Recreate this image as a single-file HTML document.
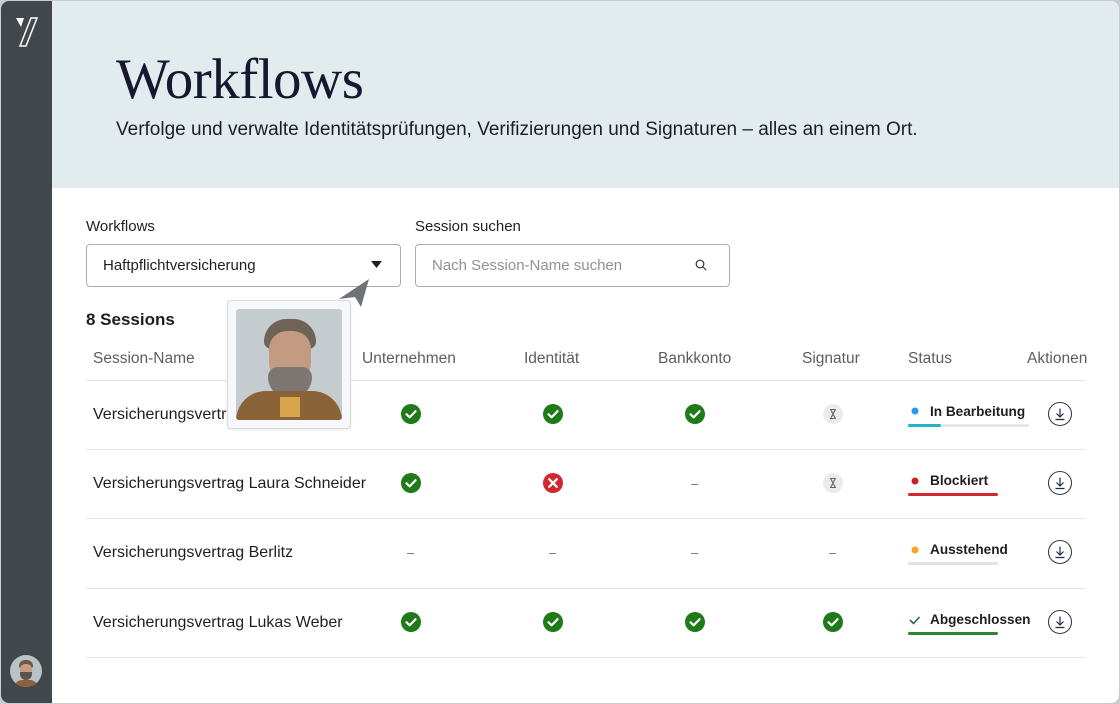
<!DOCTYPE html>
<html><head><meta charset="utf-8"><style>
*{margin:0;padding:0;box-sizing:border-box}
body{width:1120px;height:704px;background:#c9ccce;font-family:"Liberation Sans",sans-serif;color:#1d1f24;position:relative;overflow:hidden}
.frame{position:absolute;left:1px;top:1px;width:1118px;height:702px;border-radius:8px;background:#fff;overflow:hidden}
.side{position:absolute;left:0;top:0;width:51px;height:702px;background:#41474b}
.head{position:absolute;left:51px;top:0;right:0;height:187px;background:#e2ecee}
.a{position:absolute;white-space:nowrap}
h1{position:absolute;left:64px;top:46px;font-family:"Liberation Serif",serif;font-weight:400;font-size:57px;color:#15182e;letter-spacing:-0.5px}
.sub{left:64px;top:118px;font-size:19px;color:#1d1f24}
.lbl{font-size:15px;color:#1d1f24}
.box{position:absolute;border:1px solid #a9abaf;border-radius:4px;height:43px;background:#fff}
.th{font-size:15.5px;color:#5a5d63;top:349px}
.row{position:absolute;left:85px;width:1000px;height:1px;background:#e4e5e7}
.nm{font-size:16px;left:92px}
.dash{font-size:13px;color:#6a6d72}
.st{font-size:13.6px;font-weight:700;color:#1d1f24}
</style></head><body>
<div class="frame">
<div class="side">
<svg class="a" style="left:14px;top:15px" width="24" height="32" viewBox="0 0 24 32"><path d="M1 2 L9 2 L6 11 Z" fill="#fff"/><path d="M16 2 L22 2 L11 30 L5 30 Z" fill="none" stroke="#fff" stroke-width="1.5"/></svg>
<div class="a" style="left:9px;top:654px;width:32px;height:32px;border-radius:50%;background:#b9c2c5;overflow:hidden">
<div class="a" style="left:9px;top:5px;width:14px;height:8px;border-radius:6px 6px 2px 2px;background:#6b5a48"></div>
<div class="a" style="left:10px;top:9px;width:12px;height:13px;border-radius:5px;background:#c89c83"></div>
<div class="a" style="left:10px;top:17px;width:12px;height:8px;border-radius:0 0 6px 6px;background:#5a5350"></div>
<div class="a" style="left:4px;top:25px;width:24px;height:10px;border-radius:8px 8px 0 0;background:#8a6238"></div>
</div>
</div>
<div class="head">
<h1>Workflows</h1>
<div class="a sub">Verfolge und verwalte Identitätsprüfungen, Verifizierungen und Signaturen – alles an einem Ort.</div>
</div>
<div class="a lbl" style="left:85px;top:217px">Workflows</div>
<div class="a lbl" style="left:414px;top:217px">Session suchen</div>
<div class="box" style="left:85px;top:243px;width:315px"></div>
<div class="a" style="left:102px;top:256px;font-size:15px">Haftpflichtversicherung</div>
<svg class="a" style="left:370px;top:260px" width="12" height="8"><path d="M0 0 L11 0 L5.5 7Z" fill="#1d1f24"/></svg>
<div class="box" style="left:414px;top:243px;width:315px"></div>
<div class="a" style="left:431px;top:256px;font-size:15px;color:#8e9196">Nach Session-Name suchen</div>
<svg class="a" style="left:694px;top:258px" width="12" height="12"><circle cx="5" cy="5" r="3.8" fill="none" stroke="#333" stroke-width="1.2"/><path d="M8 8 L11 11" stroke="#333" stroke-width="1.2"/></svg>
<div class="a" style="left:85px;top:309px;font-size:17px;font-weight:700;color:#1d1f24">8 Sessions</div>
<div class="a th" style="left:92px">Session-Name</div>
<div class="a th" style="left:361px">Unternehmen</div>
<div class="a th" style="left:523px">Identität</div>
<div class="a th" style="left:657px">Bankkonto</div>
<div class="a th" style="left:801px">Signatur</div>
<div class="a th" style="left:907px">Status</div>
<div class="a th" style="left:1026px">Aktionen</div>
<div class="row" style="top:379px"></div>
<div class="row" style="top:448px"></div>
<div class="row" style="top:517px"></div>
<div class="row" style="top:587px"></div>
<div class="row" style="top:656px"></div>
<div class="a nm" style="top:405px;width:250px;overflow:hidden">Versicherungsvertrag Thomas Müller</div>
<div class="a nm" style="top:474px">Versicherungsvertrag Laura Schneider</div>
<div class="a nm" style="top:543px">Versicherungsvertrag Berlitz</div>
<div class="a nm" style="top:613px">Versicherungsvertrag Lukas Weber</div>
<svg class="a" style="left:0;top:0" width="1118" height="702">
<defs>
<g id="ok"><circle r="10" fill="#1f7a1a"/><path d="M-4.5 0.3 L-1.3 3.3 L4.5 -2.8" fill="none" stroke="#fff" stroke-width="2.2" stroke-linecap="round" stroke-linejoin="round"/></g>
<g id="no"><circle r="10" fill="#d1282f"/><path d="M-3.8 -3.8 L3.8 3.8 M3.8 -3.8 L-3.8 3.8" stroke="#fff" stroke-width="2.2" stroke-linecap="round"/></g>
<g id="hg"><circle r="10" fill="#ebebed"/><path d="M-3 -4.5 H3 M-3 4.5 H3 M-2.3 -4.5 L2.3 4.5 M2.3 -4.5 L-2.3 4.5" stroke="#666" stroke-width="1.1"/></g>
<g id="dl"><circle r="11.5" fill="#fff" stroke="#3a3d42" stroke-width="1.1"/><path d="M0 -5.5 V3 M-3.5 -0.5 L0 3 L3.5 -0.5 M-4.5 5.5 H4.5" fill="none" stroke="#1c2b4a" stroke-width="1.2"/></g>
</defs>
<use href="#ok" x="410" y="413"/><use href="#ok" x="552" y="413"/><use href="#ok" x="694" y="413"/><use href="#hg" x="832" y="413"/>
<use href="#ok" x="410" y="482"/><use href="#no" x="552" y="482"/><use href="#hg" x="832" y="482"/>
<use href="#ok" x="410" y="621"/><use href="#ok" x="552" y="621"/><use href="#ok" x="694" y="621"/><use href="#ok" x="832" y="621"/>
<use href="#dl" x="1059" y="413"/><use href="#dl" x="1059" y="482"/><use href="#dl" x="1059" y="551"/><use href="#dl" x="1059" y="621"/>
<circle cx="914" cy="410" r="3.5" fill="#1e9bf0"/>
<rect x="907" y="423" width="121" height="3" rx="1.5" fill="#e6e6e8"/><rect x="907" y="423" width="33" height="3" rx="1.5" fill="#1fb4c9"/>
<circle cx="914" cy="480" r="3.5" fill="#c9211f"/>
<rect x="907" y="492" width="90" height="3" rx="1.5" fill="#d1282f"/>
<circle cx="914" cy="549" r="3.5" fill="#f5a623"/>
<rect x="907" y="561" width="90" height="3" rx="1.5" fill="#e2e2e4"/>
<path d="M909 619 L912.5 622.5 L918.5 616" fill="none" stroke="#1f6b4a" stroke-width="1.6"/>
<rect x="907" y="631" width="90" height="3" rx="1.5" fill="#2a8a2a"/>
</svg>
<div class="a dash" style="left:690px;top:475px">–</div>
<div class="a dash" style="left:406px;top:544px">–</div>
<div class="a dash" style="left:548px;top:544px">–</div>
<div class="a dash" style="left:690px;top:544px">–</div>
<div class="a dash" style="left:828px;top:544px">–</div>
<div class="a st" style="left:929px;top:403px">In Bearbeitung</div>
<div class="a st" style="left:929px;top:472px">Blockiert</div>
<div class="a st" style="left:929px;top:541px">Ausstehend</div>
<div class="a st" style="left:929px;top:611px">Abgeschlossen</div>
<div class="a" style="left:226px;top:299px;width:124px;height:129px;background:#f7f8fb;border:1px solid #d6d9df;border-radius:4px;box-shadow:0 1px 3px rgba(0,0,0,.08)">
<div class="a" style="left:8px;top:8px;width:106px;height:111px;background:#c4ccd0;border-radius:3px;overflow:hidden">
<div class="a" style="left:28px;top:10px;width:52px;height:30px;border-radius:24px 24px 8px 8px;background:#6e6355"></div>
<div class="a" style="left:33px;top:22px;width:42px;height:50px;border-radius:18px;background:#c39a82"></div>
<div class="a" style="left:32px;top:58px;width:44px;height:32px;border-radius:10px 10px 22px 22px;background:#7d7773"></div>
<div class="a" style="left:0;top:82px;width:106px;height:32px;border-radius:30px 30px 0 0;background:#8b6338"></div>
<div class="a" style="left:44px;top:88px;width:20px;height:20px;background:#d7a54a"></div>
</div></div>
<svg class="a" style="left:336px;top:276px" width="36" height="32"><path d="M32 2 L2 22 L18 20 L24 30 Z" fill="#6f7277"/></svg>
</div>
</body></html>
